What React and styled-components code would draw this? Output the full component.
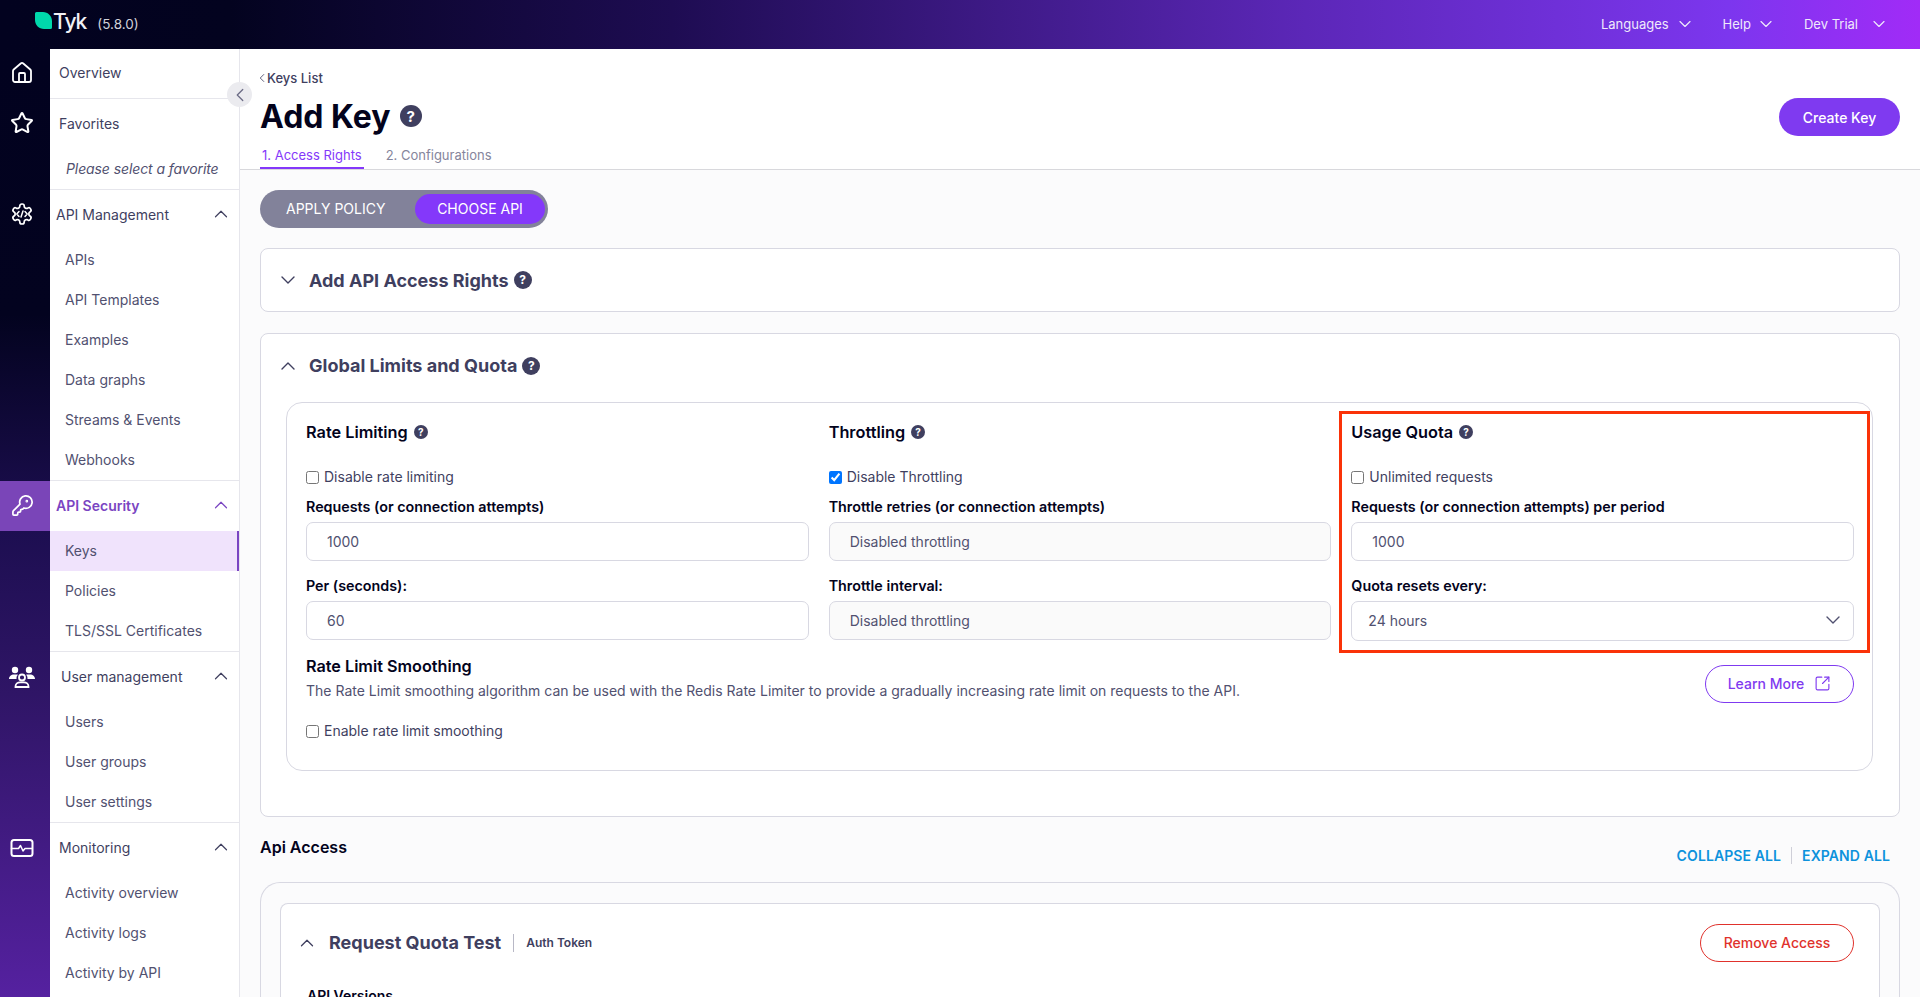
import React from 'react';
import styled, { createGlobalStyle } from 'styled-components';
import { ChevronDown, ChevronUp, ChevronLeft, House, Star, KeyRound, SquareArrowOutUpRight } from 'lucide-react';

const ink = '#03031c';
const slate = '#3f3f5f';
const muted = '#515170';
const purple = '#8438fa';
const line = '#d8d8e2';

const Global = createGlobalStyle`
    html, body { margin: 0; height: 100%; }
    body { font-family: Inter, "Liberation Sans", sans-serif; color: ${slate}; background: #fff; }
    * { box-sizing: border-box; }
`;

const Page = styled.div`
    height: 100vh;
    overflow: hidden;
    display: flex;
    flex-direction: column;
`;

const TopBar = styled.header`
    height: 49px;
    flex: none;
    display: flex;
    align-items: center;
    padding: 0 31px 2px 35px;
    color: #efe9fb;
    background: linear-gradient(90deg, #02021f 0%, #03031f 12%, #1e0c52 35%, #5c27b8 68%, #7c36ee 90%, #a12bf7 100%);
`;

const Logo = styled.div`
    display: flex;
    align-items: flex-start;
    height: 21px;
    margin-top: -3px;
`;

const LogoText = styled.span`
    margin-left: 1px;
    font-family: Inter, sans-serif;
    font-weight: 500;
    font-size: 21px;
    line-height: 20px;
    letter-spacing: -1px;
    color: #f1f1f6;
`;

const Version = styled.span`
    margin-left: 11px;
    font-size: 13.5px;
    color: #d2d2da;
`;

const TopMenu = styled.nav`
    margin-left: auto;
    display: flex;
    gap: 28px;
`;

const TopLink = styled.div`
    display: flex;
    align-items: center;
    gap: ${p => p.$gap}px;
    font-size: 13px;
`;

const Body = styled.div`
    flex: 1;
    display: flex;
    min-height: 0;
`;

const Rail = styled.aside`
    width: 50px;
    flex: none;
    background: linear-gradient(180deg, #02021f 0%, #03031f 28%, #1c0e50 50%, #2f1566 68%, #5521a0 100%);
`;

const RailCell = styled.div`
    height: ${p => p.$height}px;
`;

const RailIcon = styled.div`
    height: 50px;
    padding: 0 6px 2px 0;
    display: flex;
    align-items: center;
    justify-content: center;
    color: #fff;
    background: ${p => (p.$active ? '#7a45b8' : 'transparent')};
`;

const Sidebar = styled.nav`
    width: 190px;
    flex: none;
    position: relative;
    background: #fff;
    border-right: 1px solid #e6e6ec;
`;

const Section = styled.section`
    border-bottom: 1px solid #e6e6ec;
    &:last-of-type { border-bottom: none; }
`;

const Heading = styled.div`
    height: ${p => p.$height || 50}px;
    display: flex;
    align-items: center;
    padding: 0 7px 2px ${p => p.$inset}px;
    font-size: 14px;
    font-weight: ${p => (p.$active ? 600 : 400)};
    color: ${p => (p.$active ? '#7a45c2' : slate)};
    svg { margin-left: auto; }
`;

const Item = styled.div`
    height: 40px;
    display: flex;
    align-items: center;
    padding: 0 0 2px 15px;
    font-size: 14px;
    color: ${muted};
    ${p => p.$active && `
        background: #f0e3fc;
        border-right: 2px solid #7a45c2;
    `}
`;

const Placeholder = styled(Item)`
    padding-left: 16px;
    font-style: italic;
    letter-spacing: -0.1px;
`;

const Collapse = styled.button`
    position: absolute;
    top: 33px;
    right: -13px;
    width: 25px;
    height: 25px;
    padding: 0;
    border: none;
    border-radius: 50%;
    display: flex;
    align-items: center;
    justify-content: center;
    color: #6b6b85;
    background: #ebebef;
`;

const Main = styled.main`
    flex: 1;
    min-width: 0;
    background: #fbfbfc;
`;

const Header = styled.div`
    height: 121px;
    display: flex;
    justify-content: space-between;
    padding: 20px 20px 0;
    background: #fff;
    border-bottom: 1px solid #d8d8dc;
`;

const Crumb = styled.div`
    height: 18px;
    display: flex;
    align-items: center;
    font-size: 13px;
    font-weight: 500;
    color: ${slate};
    svg { margin: 0 -2px 0 -5px; }
`;

const TitleRow = styled.div`
    margin-top: 9px;
    height: 40px;
    display: flex;
    align-items: center;
    gap: 9px;
`;

const Title = styled.h1`
    margin: 0;
    font-size: 32px;
    font-weight: 700;
    color: ${ink};
`;

const Help = styled.span`
    width: ${p => p.$size}px;
    height: ${p => p.$size}px;
    flex: none;
    display: inline-flex;
    align-items: center;
    justify-content: center;
    border-radius: 50%;
    background: ${slate};
    color: #fff;
    font-size: ${p => Math.round(p.$size * 0.68)}px;
    font-weight: 700;
    line-height: 1;
`;

const Tabs = styled.div`
    margin-top: 3px;
    height: 30px;
    display: flex;
    gap: 20px;
`;

const Tab = styled.div`
    height: 30px;
    padding: 3px 2px 0;
    display: flex;
    align-items: center;
    font-size: 13px;
    color: ${p => (p.$active ? purple : '#85859c')};
    border-bottom: 2px solid ${p => (p.$active ? purple : 'transparent')};
`;

const PrimaryButton = styled.button`
    margin-top: 29px;
    width: 121px;
    height: 38px;
    border: none;
    border-radius: 19px;
    background: #7f3af0;
    color: #fff;
    font: 500 14px Inter, sans-serif;
`;

const Content = styled.div`
    padding: 20px 20px 0;
`;

const Toggle = styled.div`
    width: 288px;
    height: 38px;
    padding: 3px 3px 5px 26px;
    display: flex;
    align-items: center;
    justify-content: space-between;
    border-radius: 19px;
    background: #82829a;
    color: #fff;
    font-size: 14px;
`;

const TogglePill = styled.div`
    width: 130px;
    height: 30px;
    margin-top: 2px;
    padding-bottom: 2px;
    display: flex;
    align-items: center;
    justify-content: center;
    border-radius: 15px;
    background: ${purple};
`;

const Card = styled.div`
    margin-top: ${p => p.$top}px;
    height: ${p => p.$height}px;
    background: #fff;
    border: 1px solid ${line};
    border-radius: 8px;
`;

const CardHead = styled.div`
    height: ${p => p.$height}px;
    margin-bottom: ${p => p.$gap || 0}px;
    display: flex;
    align-items: center;
    padding-left: 15px;
    color: ${slate};
`;

const CardTitle = styled.h2`
    margin: 0 5px 0 9px;
    font-size: 18px;
    font-weight: 700;
    color: ${slate};
`;

const Panel = styled.div`
    margin: 0 26px 0 25px;
    height: 369px;
    padding: 19px 18px 0 19px;
    border: 1px solid ${line};
    border-radius: 16px;
`;

const Columns = styled.div`
    display: grid;
    grid-template-columns: repeat(3, 1fr);
    gap: 20px;
`;

const Column = styled.div`
    position: relative;
`;

const Highlight = styled.div`
    position: absolute;
    top: -11px;
    left: -12px;
    right: -16px;
    bottom: -12px;
    border: 3px solid #fa3208;
    pointer-events: none;
`;

const ColTitle = styled.div`
    height: 20px;
    display: flex;
    align-items: center;
    gap: 6px;
    font-size: 16.3px;
    font-weight: 600;
    color: ${ink};
`;

const Check = styled.label`
    margin-top: ${p => p.$top}px;
    height: 20px;
    display: flex;
    align-items: center;
    gap: 4px;
    font-size: 14px;
    color: ${slate};
    input { margin: 3px 1px 0 0; width: 13px; height: 13px; }
`;

const FieldLabel = styled.div`
    margin-top: ${p => p.$top}px;
    height: 18px;
    line-height: 18px;
    font-size: 14.3px;
    font-weight: 600;
    color: ${ink};
`;

const Input = styled.input`
    display: block;
    margin-top: 6px;
    width: 100%;
    height: 39px;
    padding: 0 20px;
    border: 1px solid ${line};
    border-radius: 7px;
    font: 400 14px Inter, sans-serif;
    color: ${muted};
    background: ${p => (p.$disabled ? '#fafafa' : '#fff')};
    outline: none;
`;

const Select = styled.div`
    margin-top: 6px;
    height: 40px;
    padding: 0 8px 2px 16px;
    display: flex;
    align-items: center;
    justify-content: space-between;
    border: 1px solid ${line};
    border-radius: 7px;
    font-size: 14px;
    color: ${muted};
`;

const SmoothingRow = styled.div`
    margin-top: 15px;
    display: flex;
    justify-content: space-between;
`;

const SmoothingTitle = styled.div`
    height: 20px;
    display: flex;
    align-items: center;
    font-size: 16.2px;
    font-weight: 600;
    color: ${ink};
`;

const Description = styled.p`
    margin: 5px 0 0;
    font-size: 14px;
    line-height: 20px;
    letter-spacing: 0.01px;
    color: ${muted};
`;

const OutlineButton = styled.button`
    margin-top: ${p => p.$top}px;
    margin-left: ${p => p.$left || '0'};
    width: ${p => p.$width}px;
    height: 38px;
    padding: 0 0 2px;
    display: flex;
    align-items: center;
    justify-content: center;
    gap: 10px;
    border: 1px solid ${p => p.$color};
    border-radius: 19px;
    background: #fff;
    color: ${p => p.$color};
    font: 500 14px Inter, sans-serif;
`;

const AccessRow = styled.div`
    margin-top: 19px;
    height: 46px;
    display: flex;
    justify-content: space-between;
`;

const AccessTitle = styled.div`
    height: 22px;
    line-height: 22px;
    font-size: 16px;
    font-weight: 600;
    color: ${ink};
`;

const AccessActions = styled.div`
    margin-top: 10px;
    padding-right: 10px;
    height: 18px;
    display: flex;
    align-items: center;
    font-size: 14px;
    font-weight: 600;
    letter-spacing: 0.1px;
    text-transform: uppercase;
    color: #0d92dc;
`;

const ActionLink = styled.span`
    & + & {
        margin-left: 10px;
        padding-left: 10px;
        border-left: 1px solid #cfcfd8;
    }
`;

const OuterCard = styled.div`
    height: 130px;
    padding: 20px 19px 0;
    border: 1px solid ${line};
    border-bottom: none;
    border-radius: 20px 20px 0 0;
    background: #fbfbfc;
`;

const InnerCard = styled.div`
    height: 110px;
    padding: 20px 25px 0 15px;
    background: #fff;
    border: 1px solid ${line};
    border-bottom: none;
    border-radius: 8px 8px 0 0;
`;

const ApiHead = styled.div`
    display: flex;
    align-items: center;
    color: ${slate};
    h3 {
        margin: 0 0 2px 11px;
        font-size: 18px;
        font-weight: 700;
    }
`;

const ApiType = styled.span`
    margin-left: 12px;
    padding-left: 12px;
    border-left: 1px solid #b8b8c6;
    font-size: 12px;
    font-weight: 600;
    line-height: 18px;
`;

const Versions = styled.div`
    margin: 25px 0 0 11px;
    font-size: 14px;
    line-height: 18px;
    font-weight: 600;
    color: ${ink};
`;

const LeafLogo = () => (
    <svg width="17" height="17" viewBox="0 0 17 17">
        <path d="M1.5 0H8C13 0 17 4 17 9V15.5A1.5 1.5 0 0 1 15.5 17H9C4 17 0 13 0 8V1.5A1.5 1.5 0 0 1 1.5 0Z" fill="#00d8ab" />
    </svg>
);

const CodeGear = () => (
    <svg width="24" height="24" viewBox="0 0 24 24" fill="none" stroke="currentColor" strokeWidth="1.7" strokeLinecap="round" strokeLinejoin="round">
        <path d="M12.22 2h-.44a2 2 0 0 0-2 2v.18a2 2 0 0 1-1 1.73l-.43.25a2 2 0 0 1-2 0l-.15-.08a2 2 0 0 0-2.73.73l-.22.38a2 2 0 0 0 .73 2.73l.15.1a2 2 0 0 1 1 1.72v.51a2 2 0 0 1-1 1.74l-.15.09a2 2 0 0 0-.73 2.73l.22.38a2 2 0 0 0 2.73.73l.15-.08a2 2 0 0 1 2 0l.43.25a2 2 0 0 1 1 1.73V20a2 2 0 0 0 2 2h.44a2 2 0 0 0 2-2v-.18a2 2 0 0 1 1-1.73l.43-.25a2 2 0 0 1 2 0l.15.08a2 2 0 0 0 2.73-.73l.22-.39a2 2 0 0 0-.73-2.73l-.15-.08a2 2 0 0 1-1-1.74v-.5a2 2 0 0 1 1-1.74l.15-.09a2 2 0 0 0 .73-2.73l-.22-.38a2 2 0 0 0-2.73-.73l-.15.08a2 2 0 0 1-2 0l-.43-.25a2 2 0 0 1-1-1.73V4a2 2 0 0 0-2-2z" />
        <path d="M9 9.5 6.8 12 9 14.5M15 9.5l2.2 2.5-2.2 2.5M13 9l-2 6" strokeWidth="1.5" />
    </svg>
);

const TeamIcon = () => (
    <svg width="26" height="22" viewBox="0 0 26 22" fill="currentColor">
        <circle cx="6" cy="4" r="3.2" />
        <circle cx="20" cy="4" r="3.2" />
        <path d="M0 13c0-2.6 2.2-4.5 5-4.5h2.5c.5 0 1 .1 1.4.3-.9.9-1.4 2.1-1.4 3.4 0 .3 0 .5.1.8H0Z" />
        <path d="M26 13c0-2.6-2.2-4.5-5-4.5h-2.5c-.5 0-1 .1-1.4.3.9.9 1.4 2.1 1.4 3.4 0 .3 0 .5-.1.8H26Z" />
        <circle cx="13" cy="11.5" r="3" fill="none" stroke="currentColor" strokeWidth="1.8" />
        <path d="M6.5 20.5c0-2.6 2.2-4.2 4.5-4.2h4c2.3 0 4.5 1.6 4.5 4.2v.5h-13v-.5Z" fill="none" stroke="currentColor" strokeWidth="1.8" />
    </svg>
);

const PulseIcon = () => (
    <svg width="24" height="20" viewBox="0 0 24 20" fill="none" stroke="currentColor" strokeWidth="2" strokeLinejoin="round" strokeLinecap="round">
        <rect x="1.5" y="2" width="21" height="16" rx="2.5" />
        <path d="M1.5 10.5h7l2-3 2.5 5.5 2-2.5h7" strokeWidth="1.5" />
    </svg>
);

const menu = [
    { label: 'API Management', inset: 6, items: ['APIs', 'API Templates', 'Examples', 'Data graphs', 'Streams & Events', 'Webhooks'] },
    { label: 'API Security', inset: 6, active: true, items: ['Keys', 'Policies', 'TLS/SSL Certificates'] },
    { label: 'User management', inset: 11, items: ['Users', 'User groups', 'User settings'] },
    { label: 'Monitoring', inset: 9, items: ['Activity overview', 'Activity logs', 'Activity by API'] },
];

const Side = () => (
    <Sidebar>
        <Section>
            <Heading $inset={9} $height={49}>Overview</Heading>
        </Section>
        <Section>
            <Heading $inset={9}>Favorites</Heading>
            <Placeholder>Please select a favorite</Placeholder>
        </Section>
        {menu.map(group => (
            <Section key={group.label}>
                <Heading $inset={group.inset} $active={group.active}>
                    {group.label}
                    <ChevronUp size={22} strokeWidth={1.3} />
                </Heading>
                {group.items.map(item => (
                    <Item key={item} $active={item === 'Keys'}>{item}</Item>
                ))}
            </Section>
        ))}
        <Collapse><ChevronLeft size={22} strokeWidth={1.4} /></Collapse>
    </Sidebar>
);

const LimitColumn = ({ title, check, checked, label, value, second, children }) => (
    <Column>
        <ColTitle>{title}<Help $size={14}>?</Help></ColTitle>
        <Check $top={24}>
            <input type="checkbox" checked={!!checked} readOnly />
            {check}
        </Check>
        <FieldLabel $top={12}>{label}</FieldLabel>
        <Input value={value} readOnly $disabled={checked} />
        <FieldLabel $top={16}>{second}</FieldLabel>
        {children}
    </Column>
);

export default function App() {
    return (
        <Page>
            <Global />
            <TopBar>
                <Logo>
                    <LeafLogo />
                    <LogoText>Tyk</LogoText>
                </Logo>
                <Version>(5.8.0)</Version>
                <TopMenu>
                    <TopLink $gap={6}>Languages <ChevronDown size={20} strokeWidth={1.4} /></TopLink>
                    <TopLink $gap={5}>Help <ChevronDown size={20} strokeWidth={1.4} /></TopLink>
                    <TopLink $gap={11}>Dev Trial <ChevronDown size={20} strokeWidth={1.4} /></TopLink>
                </TopMenu>
            </TopBar>
            <Body>
                <Rail>
                    <RailCell $height={50}><RailIcon><House size={24} strokeWidth={1.8} /></RailIcon></RailCell>
                    <RailCell $height={91}><RailIcon><Star size={24} strokeWidth={2} /></RailIcon></RailCell>
                    <RailCell $height={291}><RailIcon><CodeGear /></RailIcon></RailCell>
                    <RailCell $height={172}><RailIcon $active><KeyRound size={23} strokeWidth={1.8} /></RailIcon></RailCell>
                    <RailCell $height={171}><RailIcon><TeamIcon /></RailIcon></RailCell>
                    <RailCell $height={170}><RailIcon><PulseIcon /></RailIcon></RailCell>
                </Rail>
                <Side />
                <Main>
                    <Header>
                        <div>
                            <Crumb><ChevronLeft size={14} strokeWidth={1.4} />Keys List</Crumb>
                            <TitleRow><Title>Add Key</Title><Help $size={22}>?</Help></TitleRow>
                            <Tabs>
                                <Tab $active>1. Access Rights</Tab>
                                <Tab>2. Configurations</Tab>
                            </Tabs>
                        </div>
                        <PrimaryButton>Create Key</PrimaryButton>
                    </Header>
                    <Content>
                        <Toggle>
                            APPLY POLICY
                            <TogglePill>CHOOSE API</TogglePill>
                        </Toggle>
                        <Card $top={20} $height={64}>
                            <CardHead $height={62}>
                                <ChevronDown size={24} strokeWidth={1.4} />
                                <CardTitle>Add API Access Rights</CardTitle>
                                <Help $size={18}>?</Help>
                            </CardHead>
                        </Card>
                        <Card $top={21} $height={484}>
                            <CardHead $height={63} $gap={5}>
                                <ChevronUp size={24} strokeWidth={1.4} />
                                <CardTitle>Global Limits and Quota</CardTitle>
                                <Help $size={18}>?</Help>
                            </CardHead>
                            <Panel>
                                <Columns>
                                    <LimitColumn
                                        title="Rate Limiting"
                                        check="Disable rate limiting"
                                        label="Requests (or connection attempts)"
                                        value="1000"
                                        second="Per (seconds):"
                                    >
                                        <Input value="60" readOnly />
                                    </LimitColumn>
                                    <LimitColumn
                                        title="Throttling"
                                        check="Disable Throttling"
                                        checked
                                        label="Throttle retries (or connection attempts)"
                                        value="Disabled throttling"
                                        second="Throttle interval:"
                                    >
                                        <Input value="Disabled throttling" readOnly $disabled />
                                    </LimitColumn>
                                    <LimitColumn
                                        title="Usage Quota"
                                        check="Unlimited requests"
                                        label="Requests (or connection attempts) per period"
                                        value="1000"
                                        second="Quota resets every:"
                                    >
                                        <Select>24 hours <ChevronDown size={24} strokeWidth={1.4} /></Select>
                                        <Highlight />
                                    </LimitColumn>
                                </Columns>
                                <SmoothingRow>
                                    <div>
                                        <SmoothingTitle>Rate Limit Smoothing</SmoothingTitle>
                                        <Description>The Rate Limit smoothing algorithm can be used with the Redis Rate Limiter to provide a gradually increasing rate limit on requests to the API.</Description>
                                    </div>
                                    <OutlineButton $top={9} $width={149} $color="#7f3af0">
                                        Learn More
                                        <SquareArrowOutUpRight size={17} strokeWidth={1.6} />
                                    </OutlineButton>
                                </SmoothingRow>
                                <Check $top={17}>
                                    <input type="checkbox" readOnly />
                                    Enable rate limit smoothing
                                </Check>
                            </Panel>
                        </Card>
                        <AccessRow>
                            <AccessTitle>Api Access</AccessTitle>
                            <AccessActions>
                                <ActionLink>Collapse all</ActionLink>
                                <ActionLink>Expand all</ActionLink>
                            </AccessActions>
                        </AccessRow>
                        <OuterCard>
                            <InnerCard>
                                <ApiHead>
                                    <ChevronUp size={22} strokeWidth={1.4} />
                                    <h3>Request Quota Test</h3>
                                    <ApiType>Auth Token</ApiType>
                                    <OutlineButton $top={0} $left="auto" $width={154} $color="#e0322c">Remove Access</OutlineButton>
                                </ApiHead>
                                <Versions>API Versions</Versions>
                            </InnerCard>
                        </OuterCard>
                    </Content>
                </Main>
            </Body>
        </Page>
    );
}
